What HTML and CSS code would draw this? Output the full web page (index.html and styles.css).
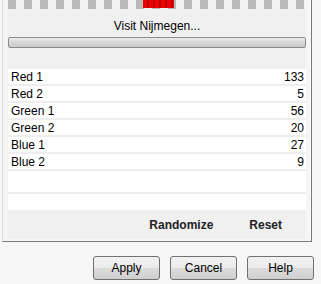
FILE: index.html
```html
<!DOCTYPE html>
<html lang="en">
<head>
   <meta charset="UTF-8">
   <title>Random colours</title>
   <link rel="stylesheet" href="styles.css">
</head>
<body>
   <div class="dialog">
      <div class="box">
         <div class="content">
            <div class="preview"><div class="red"></div></div>
            <div class="top">
               <p class="visit">Visit Nijmegen...</p>
               <div class="bar"></div>
            </div>
            <div class="rows">
               <div class="row"><span>Red 1</span><span>133</span></div>
               <div class="row"><span>Red 2</span><span>5</span></div>
               <div class="row"><span>Green 1</span><span>56</span></div>
               <div class="row"><span>Green 2</span><span>20</span></div>
               <div class="row"><span>Blue 1</span><span>27</span></div>
               <div class="row"><span>Blue 2</span><span>9</span></div>
               <div class="blank"></div>
            </div>
            <div class="tools">
               <span>Randomize</span>
               <span>Reset</span>
            </div>
         </div>
      </div>
      <div class="buttons">
         <button>Apply</button>
         <button>Cancel</button>
         <button>Help</button>
      </div>
   </div>
</body>
</html>
```

FILE: styles.css
```css
* {
   margin: 0;
   padding: 0;
   box-sizing: border-box;
}

body {
   width: 321px;
   height: 284px;
   overflow: hidden;
   background: #f6f6f6;
   font-family: "Liberation Sans", Arial, sans-serif;
   font-size: 11px;
   color: #000;
}

.dialog {
   height: 284px;
   padding-left: 2px;
   border-left: 0;
}

.box {
   width: 310px;
   height: 242px;
   border-left: 1px solid #dcdcdc;
   border-right: 1px solid #7a7a7a;
   border-bottom: 1px solid #7a7a7a;
   padding-left: 5px;
   padding-right: 5px;
}

.content {
   width: 298px;
}

.preview {
   height: 9px;
   background: repeating-linear-gradient(90deg, #b9b9b9 0 8px, #f2f2f2 8px 16px);
   display: flex;
   justify-content: center;
   padding-left: 2px;
}

.red {
   width: 31px;
   height: 8px;
   background: repeating-linear-gradient(90deg, #ee0000 0 4px, #b80000 4px 6px);
}

.top {
   background: #f0f0f0;
   height: 60px;
   padding-top: 10px;
}

.visit {
   text-align: center;
   font-size: 12px;
   height: 18px;
}

.bar {
   height: 11px;
   border: 1px solid #8c8c8c;
   border-radius: 2px;
   background: linear-gradient(#ececec, #d6d6d6 50%, #c9c9c9);
}

.rows {
   background: #fff;
}

.row {
   height: 17px;
   display: flex;
   justify-content: space-between;
   align-items: center;
   padding: 0 2px 0 3px;
   border-bottom: 2px solid #eeeeee;
   font-size: 12px;
}

.blank {
   height: 39px;
   border-bottom: 0;
   background: linear-gradient(#fff 0 21px, #ececec 21px 23px, #fff 23px);
}

.tools {
   height: 29px;
   background: #f0f0f0;
   display: flex;
   justify-content: flex-end;
   align-items: center;
   gap: 36px;
   padding-right: 24px;
   font-size: 12px;
   font-weight: bold;
   color: #222;
}

.buttons {
   display: flex;
   justify-content: flex-end;
   gap: 10px;
   padding-top: 14px;
   width: 312px;
}

button {
   width: 67px;
   height: 24px;
   border: 1px solid #707070;
   border-radius: 3px;
   background: linear-gradient(#f2f2f2, #ebebeb 50%, #dcdcdc 51%, #cfcfcf);
   font-family: "Liberation Sans", Arial, sans-serif;
   font-size: 12px;
   color: #000;
}
```
